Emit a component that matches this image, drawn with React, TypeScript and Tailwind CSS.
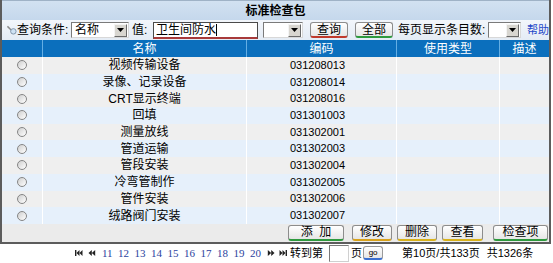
import React from "react";

const names = [
  "视频传输设备",
  "录像、记录设备",
  "CRT显示终端",
  "回填",
  "测量放线",
  "管道运输",
  "管段安装",
  "冷弯管制作",
  "管件安装",
  "绒路阀门安装",
];
const codes = [
  "031208013",
  "031208014",
  "031208016",
  "031301003",
  "031302001",
  "031302003",
  "031302004",
  "031302005",
  "031302006",
  "031302007",
];

function Arrow() {
  return (
    <div className="w-[13px] h-[13px] shrink-0 bg-[#d8d6d0] border border-t-[#f4f4f4] border-l-[#f4f4f4] border-r-[#6a6a6a] border-b-[#6a6a6a] flex items-center justify-center">
      <svg width="7" height="4" viewBox="0 0 7 4">
        <polygon points="0,0 7,0 3.5,4" fill="#000" />
      </svg>
    </div>
  );
}

function SelectBox({ w, text }: { w: string; text?: string }) {
  return (
    <div
      className={`${w} h-[16px] shrink-0 bg-white border border-t-[#7a7a7a] border-l-[#7a7a7a] border-r-[#d8d8d8] border-b-[#d8d8d8] flex items-center justify-between pl-[3px] pr-[1px]`}
    >
      <span className="text-[12px] leading-none text-black whitespace-nowrap">{text ?? ""}</span>
      <Arrow />
    </div>
  );
}

function Btn({ w, label, line }: { w: string; label: string; line: string }) {
  return (
    <div
      className={`${w} h-[16px] shrink-0 rounded-[3px] border border-[#8c8c8c] ${line} border-b-2 bg-gradient-to-b from-white to-[#e6e6e6] flex items-center justify-center text-[12px] leading-none text-black whitespace-pre`}
    >
      {label}
    </div>
  );
}

function Radio() {
  return (
    <div className="w-[10px] h-[10px] rounded-full border border-[#858585] bg-gradient-to-br from-[#cfcfcf] to-white" />
  );
}

function PageIcon({ kind }: { kind: "first" | "prev" | "next" | "last" }) {
  const flip = kind === "next" || kind === "last";
  const bar = kind === "first" || kind === "last";
  return (
    <svg
      width="8"
      height="6"
      viewBox="0 0 8 6"
      className="shrink-0"
      style={{ transform: flip ? "scaleX(-1)" : undefined }}
    >
      {bar && <rect x="0" y="0" width="1.4" height="6" fill="#222" />}
      <polygon points={bar ? "1.5,3 4.5,0 4.5,6" : "0.5,3 3.8,0 3.8,6"} fill="#222" />
      <polygon points={bar ? "4.5,3 7.5,0 7.5,6" : "3.8,3 7.2,0 7.2,6"} fill="#222" />
    </svg>
  );
}

export default function App() {
  return (
    <div className="w-[553px] h-[263px] bg-white font-['Liberation_Sans','Noto_Sans_CJK_SC',sans-serif] text-black overflow-hidden">
      <div className="w-[551px] border-l-2 border-r-2 border-b-2 border-[#5c5c5c]">
        {/* Title bar */}
        <div className="h-[20px] border-t border-[#9fb2c6] bg-gradient-to-b from-[#d2e1f1] to-[#c5d8ec] flex items-center justify-center">
          <span className="text-[12px] font-bold leading-none text-black">标准检查包</span>
        </div>
        {/* Search row */}
        <div className="h-[20px] bg-gradient-to-b from-[#f2f6fb] to-[#e4ecf5] flex items-center whitespace-nowrap">
          <div className="w-[15px] shrink-0 pl-[5px] flex items-center">
            <svg width="11" height="10" viewBox="0 0 11 10">
              <line x1="0.5" y1="1" x2="4.5" y2="5" stroke="#8a8a8a" strokeWidth="1.6" />
              <circle cx="7" cy="6.5" r="3" fill="#cfe3f5" stroke="#7a8ea5" strokeWidth="1" />
            </svg>
          </div>
          <span className="w-[54px] shrink-0 text-[12px] leading-none">查询条件:</span>
          <SelectBox w="w-[58px]" text="名称" />
          <span className="w-[21px] shrink-0 ml-[3px] text-[12px] leading-none">值:</span>
          <div className="w-[105px] h-[17px] shrink-0 bg-white border border-[#4a4a4a] border-b-2 border-b-[#a83a3a] flex items-center pl-[2px]">
            <span className="text-[12px] leading-none">卫生间防水</span>
            <span className="w-px h-[12px] bg-black" />
          </div>
          <div className="ml-[5px] shrink-0">
            <SelectBox w="w-[40px]" />
          </div>
          <div className="ml-[7px] shrink-0">
            <Btn w="w-[38px]" label="查询" line="border-b-[#c0392b]" />
          </div>
          <div className="ml-[7px] shrink-0">
            <Btn w="w-[38px]" label="全部" line="border-b-[#2e9a3e]" />
          </div>
          <span className="w-[90px] shrink-0 ml-[5px] text-[12px] leading-none">每页显示条目数:</span>
          <SelectBox w="w-[33px]" />
          <span className="ml-[6px] shrink-0 text-[11px] leading-none text-[#2448c8]">帮助</span>
        </div>
        {/* Header */}
        <div className="h-[17px] bg-[#0b6fbd] flex text-white text-[12px] leading-none">
          <div className="w-[41px] border-r border-[#64aee4]" />
          <div className="w-[204px] border-r border-[#64aee4] flex items-center justify-center">名称</div>
          <div className="w-[150px] border-r border-[#64aee4] flex items-center justify-center">编码</div>
          <div className="w-[103px] border-r border-[#64aee4] flex items-center justify-center">使用类型</div>
          <div className="flex-1 flex items-center justify-center">描述</div>
        </div>
        {/* Rows */}
        {names.map((n, i) => (
          <div
            key={i}
            className={`h-[16.7px] flex text-[12px] leading-none ${i % 2 === 0 ? "bg-[#efefef]" : "bg-[#e6f0fb]"}`}
          >
            <div className="w-[41px] border-r border-white flex items-center justify-center">
              <Radio />
            </div>
            <div className="w-[204px] border-r border-white flex items-center justify-center">{n}</div>
            <div className="w-[150px] border-r border-white flex items-center pl-[43px] text-[11px]">
              {codes[i]}
            </div>
            <div className="w-[103px] border-r border-white" />
            <div className="flex-1" />
          </div>
        ))}
        {/* Button bar */}
        <div className="h-[18px] bg-[#ebebeb] flex items-center pl-[286px]">
          <Btn w="w-[56px]" label="添  加" line="border-b-[#2e9a3e]" />
          <div className="ml-[8px]">
            <Btn w="w-[40px]" label="修改" line="border-b-[#d9a21b]" />
          </div>
          <div className="ml-[5px]">
            <Btn w="w-[40px]" label="删除" line="border-b-[#d9b21b]" />
          </div>
          <div className="ml-[5px]">
            <Btn w="w-[41px]" label="查看" line="border-b-[#d9b21b]" />
          </div>
          <div className="ml-[10px]">
            <Btn w="w-[55px]" label="检查项" line="border-b-[#2e9a3e]" />
          </div>
        </div>
      </div>
      {/* Pagination */}
      <div className="h-[19px] flex items-center pl-[75px] text-[11px] leading-none whitespace-nowrap">
        <PageIcon kind="first" />
        <div className="ml-[5px] flex">
          <PageIcon kind="prev" />
        </div>
        <div className="ml-[6px] flex gap-[5.5px] font-['Liberation_Serif',serif] text-[11px] text-[#2b3f9e]">
          {[11, 12, 13, 14, 15, 16, 17, 18, 19, 20].map((p) => (
            <span key={p}>{p}</span>
          ))}
        </div>
        <div className="ml-[6px] flex">
          <PageIcon kind="next" />
        </div>
        <div className="ml-[4px] flex">
          <PageIcon kind="last" />
        </div>
        <span className="ml-[3px]">转到第</span>
        <div className="ml-[6px] w-[20px] h-[17px] shrink-0 bg-white border border-t-[#7a7a7a] border-l-[#7a7a7a] border-r-[#d0d0d0] border-b-[#d0d0d0]" />
        <span className="ml-[2px]">页</span>
        <div className="ml-[1px] w-[20px] h-[14px] shrink-0 rounded-[3px] border border-[#9a9a9a] border-b-2 border-b-[#3a6fd0] bg-gradient-to-b from-white to-[#e6e6e6] flex items-center justify-center text-[8px] leading-none">
          go
        </div>
        <span className="ml-[19px]">第10页/共133页</span>
        <span className="ml-[7px]">共1326条</span>
      </div>
    </div>
  );
}
